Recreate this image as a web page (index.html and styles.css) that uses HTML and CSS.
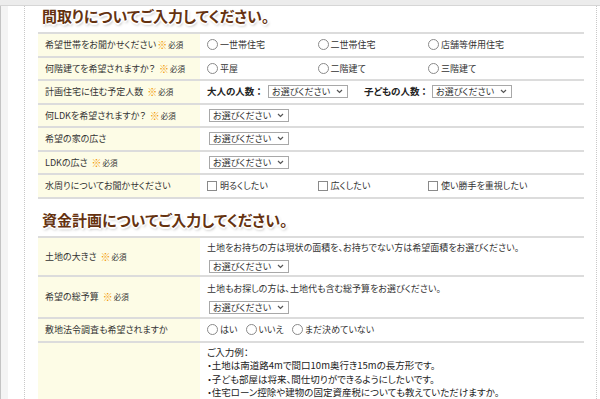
FILE: index.html
```html
<!DOCTYPE html>
<html lang="ja">
<head>
  <meta charset="UTF-8" />
  <title>お問い合わせフォーム</title>
  <link rel="stylesheet" href="styles.css">
</head>
<body>
  <div class="topbar"></div>
  <div class="page">
    <div class="side"></div>
    <div class="main">

      <h2 class="midashi">間取りについてご入力してください。</h2>
      <div class="form">
        <div class="row">
          <div class="label">希望世帯をお聞かせください<span class="hissu"><i>※</i>必須</span></div>
          <div class="value opts">
            <span class="opt"><span class="radio"></span>一世帯住宅</span>
            <span class="opt"><span class="radio"></span>二世帯住宅</span>
            <span class="opt"><span class="radio"></span>店舗等併用住宅</span>
          </div>
        </div>
        <div class="row">
          <div class="label">何階建てを希望されますか？ <span class="hissu gap"><i>※</i>必須</span></div>
          <div class="value opts">
            <span class="opt"><span class="radio"></span>平屋</span>
            <span class="opt"><span class="radio"></span>二階建て</span>
            <span class="opt"><span class="radio"></span>三階建て</span>
          </div>
        </div>
        <div class="row">
          <div class="label">計画住宅に住む予定人数 <span class="hissu gap"><i>※</i>必須</span></div>
          <div class="value">
            <b class="nin">大人の人数 ：</b>
            <div class="select">お選びください<svg width="7" height="5" viewBox="0 0 7 5"><path d="M1 1 L3.5 3.5 L6 1" fill="none" stroke="#555" stroke-width="1.2"/></svg></div>
            <b class="nin nin2">子どもの人数 ：</b>
            <div class="select">お選びください<svg width="7" height="5" viewBox="0 0 7 5"><path d="M1 1 L3.5 3.5 L6 1" fill="none" stroke="#555" stroke-width="1.2"/></svg></div>
          </div>
        </div>
        <div class="row">
          <div class="label">何LDKを希望されますか？ <span class="hissu gap"><i>※</i>必須</span></div>
          <div class="value">
            <div class="select">お選びください<svg width="7" height="5" viewBox="0 0 7 5"><path d="M1 1 L3.5 3.5 L6 1" fill="none" stroke="#555" stroke-width="1.2"/></svg></div>
          </div>
        </div>
        <div class="row">
          <div class="label">希望の家の広さ</div>
          <div class="value">
            <div class="select">お選びください<svg width="7" height="5" viewBox="0 0 7 5"><path d="M1 1 L3.5 3.5 L6 1" fill="none" stroke="#555" stroke-width="1.2"/></svg></div>
          </div>
        </div>
        <div class="row">
          <div class="label">LDKの広さ <span class="hissu gap"><i>※</i>必須</span></div>
          <div class="value">
            <div class="select">お選びください<svg width="7" height="5" viewBox="0 0 7 5"><path d="M1 1 L3.5 3.5 L6 1" fill="none" stroke="#555" stroke-width="1.2"/></svg></div>
          </div>
        </div>
        <div class="row">
          <div class="label">水周りについてお聞かせください</div>
          <div class="value opts">
            <span class="opt"><span class="check"></span>明るくしたい</span>
            <span class="opt"><span class="check"></span>広くしたい</span>
            <span class="opt"><span class="check"></span>使い勝手を重視したい</span>
          </div>
        </div>
      </div>

      <h2 class="midashi midashi2">資金計画についてご入力してください。</h2>
      <div class="form">
        <div class="row">
          <div class="label">土地の大きさ <span class="hissu gap"><i>※</i>必須</span></div>
          <div class="value tate">
            <p>土地をお持ちの方は現状の面積を、お持ちでない方は希望面積をお選びください。</p>
            <div class="select">お選びください<svg width="7" height="5" viewBox="0 0 7 5"><path d="M1 1 L3.5 3.5 L6 1" fill="none" stroke="#555" stroke-width="1.2"/></svg></div>
          </div>
        </div>
        <div class="row">
          <div class="label">希望の総予算 <span class="hissu gap"><i>※</i>必須</span></div>
          <div class="value tate tate2">
            <p>土地もお探しの方は、土地代も含む総予算をお選びください。</p>
            <div class="select">お選びください<svg width="7" height="5" viewBox="0 0 7 5"><path d="M1 1 L3.5 3.5 L6 1" fill="none" stroke="#555" stroke-width="1.2"/></svg></div>
          </div>
        </div>
        <div class="row">
          <div class="label">敷地法令調査も希望されますか</div>
          <div class="value">
            <span class="yoko"><span class="radio"></span>はい</span>
            <span class="yoko"><span class="radio"></span>いいえ</span>
            <span class="yoko"><span class="radio"></span>まだ決めていない</span>
          </div>
        </div>
        <div class="row">
          <div class="label"></div>
          <div class="value rei">
            <p>ご入力例：</p>
            <p>・土地は南道路4mで間口10m奥行き15mの長方形です。</p>
            <p>・子ども部屋は将来、間仕切りができるようにしたいです。</p>
            <p>・住宅ローン控除や建物の固定資産税についても教えていただけますか。</p>
          </div>
        </div>
      </div>

    </div>
  </div>
</body>
</html>
```

FILE: styles.css
```css
body {
  margin: 0;
  font-family: "Noto Sans CJK JP", "Noto Sans", sans-serif;
  font-size: 9px;
  color: #333;
  background: #fff;
  font-feature-settings: "palt";
  overflow: hidden;
}
.topbar {
  height: 5px;
  background: #ececec;
  border-bottom: 1px solid #d6d6d6;
}
.page {
  display: flex;
}
.side {
  width: 7px;
  min-height: 393px;
  background: #f4f4f4;
  border-left: 1px solid #c4c4c4;
}
.main {
  margin-left: 16px;
  width: 546px;
  padding: 0 12px 0 13px;
  border-left: 1px dotted #c8c8c8;
  border-right: 1px dotted #c8c8c8;
}
.midashi {
  margin: 0;
  padding: 0 0 6px 4px;
  line-height: 20px;
  font-size: 15px;
  font-weight: bold;
  color: #653210;
  text-shadow:
    1px 0 0 #fff, -1px 0 0 #fff, 0 1px 0 #fff, 0 -1px 0 #fff,
    2px 0 1px #fff, -2px 0 1px #fff, 0 2px 1px #fff, 0 -2px 1px #fff,
    1px 2px 3px rgba(0,0,0,0.35);
}
.midashi2 {
  margin-top: 11.5px;
}
.form {
  border-top: 2px solid #dcdcdc;
}
.row {
  display: grid;
  grid-template-columns: 162px 1fr;
  border-bottom: 2px solid #dcdcdc;
}
.label {
  background: #fdfce6;
  padding: 4px 7px 4.5px;
  line-height: 13px;
  display: flex;
  align-items: center;
}
.hissu {
  display: flex;
  align-items: center;
  font-size: 7.5px;
  margin-left: 1px;
  color: #333;
}
.hissu.gap {
  margin-left: 4px;
}
.hissu i {
  font-style: normal;
  font-weight: bold;
  color: #f39800;
  font-size: 10px;
  margin-right: 1px;
}
.value {
  padding: 4px 7px 4.5px;
  line-height: 13px;
  display: flex;
  align-items: center;
}
.opts {
  display: grid;
  grid-template-columns: repeat(3, 110.5px);
}
.opt, .yoko {
  display: flex;
  align-items: center;
}
.yoko {
  margin-right: 8px;
}
.radio {
  width: 9px;
  height: 9px;
  border: 1px solid #8a8a8a;
  border-radius: 50%;
  margin-right: 2px;
  background: #fff;
}
.check {
  width: 8px;
  height: 8px;
  border: 1px solid #8a8a8a;
  margin-right: 3px;
  background: #fff;
}
.select {
  width: 80px;
  height: 13px;
  box-sizing: border-box;
  border: 1px solid #a8a8a8;
  padding: 0 4px 0 3px;
  line-height: 11px;
  display: flex;
  justify-content: space-between;
  align-items: center;
  background: #fff;
  margin-left: 2px;
}
.nin {
  width: 59px;
  font-size: 9.5px;
  color: #222;
}
.nin2 {
  margin-left: 16px;
  width: 66px;
}
.tate {
  flex-direction: column;
  align-items: flex-start;
  padding: 3px 7px 2px;
}
.tate p {
  margin: 0 0 6px;
}
.tate2 {
  padding: 5px 7px 3px;
}
.rei {
  flex-direction: column;
  align-items: flex-start;
  padding: 3px 7px;
  line-height: 13.5px;
  font-size: 9.5px;
  color: #222;
}
.rei p {
  margin: 0;
}
```
